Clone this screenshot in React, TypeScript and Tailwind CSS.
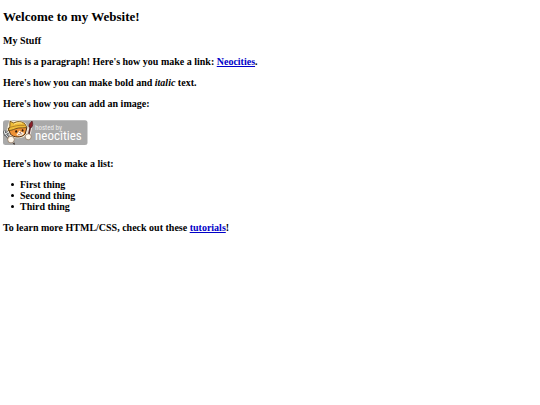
const things = ["First thing", "Second thing", "Third thing"];

//the "hosted by" badge with the cat mascot
const NeocitiesBadge = () => (
  <svg viewBox="0 0 85 26" className="block w-[85px] h-[26px]" role="img" aria-label="hosted by neocities">
    <rect x="0" y="0.2" width="84.5" height="24.8" rx="2.5" fill="#a9a9a9" />
    {/* wrench */}
    <path d="M1 10.4 L2 14 L5.4 12.2 M2.6 14.4 L7.4 20" stroke="#3e4144" strokeWidth="2.4" fill="none" />
    <path d="M1 10.4 L2 14 L5.4 12.2 M2.6 14.4 L7.4 20" stroke="#e6e8e9" strokeWidth="1.1" fill="none" />
    {/* brush */}
    <path d="M25.2 17 L27.6 6" stroke="#f4ece6" strokeWidth="3.6" />
    <path d="M25.2 17 L27.6 6" stroke="#5a2a2a" strokeWidth="1.7" />
    <path d="M26 7 C25.6 4.4 27.2 3 29 1 C30.2 3.4 29.8 5.8 28.4 7.6 Z" fill="#8b1f28" stroke="#4a1a20" strokeWidth="0.7" />
    {/* light rim round the head */}
    <path d="M7 0.8 L11 2 C14 0.8 19 0.8 22.4 4 L24.4 8.4 L23.4 13.6 C20 18.6 11 18.4 7.6 15 L4.6 9.6 Z" fill="#fff4dc" stroke="#fff4dc" strokeWidth="1.4" />
    {/* head */}
    <path d="M5.2 8.6 L7.4 14 C9.8 17.8 18.8 18.2 22.2 14 L23.8 8 L20 6 L10 5 Z" fill="#ee9236" stroke="#2e190c" strokeWidth="0.9" />
    <path d="M13.4 14.4 C14.6 13.2 15.4 12.4 16.4 10.4 C17.8 12 19.8 12 21.2 13 C19.6 16.2 15.4 16.8 13.4 14.4 Z" fill="#fff6ea" />
    <ellipse cx="13.2" cy="11.4" rx="1" ry="1.2" fill="#2a170d" />
    <ellipse cx="19.6" cy="10.4" rx="0.9" ry="1.2" fill="#2a170d" />
    <path d="M15 14.6 Q16.6 15.2 17.2 13.8 Q18.2 14.6 19.2 13.4" fill="none" stroke="#6b3c24" strokeWidth="0.6" />
    <path d="M16.2 12.2 L18 11.8 L17.2 13.2 Z" fill="#7c3024" />
    {/* hard hat with the ear poking out */}
    <path d="M7 1.2 L6.8 6.6 L5 10.4 C9 11 12 8.4 15.4 8 C18.6 7.6 21 8.2 24 7.6 L22 4 C19 1 14 1 10.8 3 Z" fill="#f0bd3a" stroke="#5c3d14" strokeWidth="0.8" />
    <path d="M6.8 7.4 C11 6.4 15 4.8 21.6 5.4" fill="none" stroke="#9c6b1c" strokeWidth="0.7" />
    <path d="M11 4.2 C13.4 2.8 16.4 2.3 19 3.2" fill="none" stroke="#ffe48a" strokeWidth="1" />
    {/* paws */}
    <circle cx="8" cy="19.6" r="3.3" fill="#fff8ec" stroke="#7c5a3c" strokeWidth="0.6" />
    <path d="M9.6 23.6 L11.8 22.6 L11.6 25 Z" fill="#3e3028" />
    <circle cx="25.2" cy="16.8" r="3" fill="#fff8ec" stroke="#7c5a3c" strokeWidth="0.6" />
    <g className="font-normal font-['Roboto_Condensed','Liberation_Sans_Narrow','DejaVu_Sans_Condensed',sans-serif]">
      <text x="32" y="9.8" fontSize="7" fill="#ececec">hosted by</text>
      <text x="32" y="19.6" fontSize="13" fill="#ffffff">neocities</text>
    </g>
  </svg>
);

const App = () => {
  return (
    <main className="flex flex-col items-start gap-2.5 px-[3px] py-[9px] bg-white text-black font-bold text-[10px] leading-[11px] font-['Liberation_Serif',serif]">
      <h1 className="text-[13px] leading-4">Welcome to my Website!</h1>
      <h2>My Stuff</h2>
      <p>
        This is a paragraph! Here's how you make a link:{" "}
        <a href="https://neocities.org" className="text-[#0000c8] underline">Neocities</a>.
      </p>
      <p>
        Here's how you can make <strong>bold</strong> and <em>italic</em> text.
      </p>
      <p>Here's how you can add an image:</p>
      <div className="pt-px pb-0.5">
        <NeocitiesBadge />
      </div>
      <p>Here's how to make a list:</p>
      <ul className="pl-2">
        {things.map((thing) => (
          <li key={thing} className="flex items-center gap-1.5 before:size-[3px] before:rounded-full before:bg-black before:content-['']">
            {thing}
          </li>
        ))}
      </ul>
      <p>
        To learn more HTML/CSS, check out these{" "}
        <a href="https://neocities.org/tutorials" className="text-[#0000c8] underline">tutorials</a>!
      </p>
    </main>
  );
};

export default App;
